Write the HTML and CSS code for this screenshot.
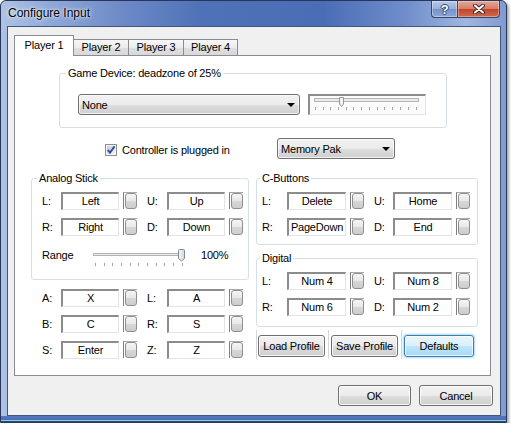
FILE: index.html
```html
<!DOCTYPE html>
<html lang="en">
<head>
  <meta charset="UTF-8">
  <title>Configure Input</title>
  <link rel="stylesheet" href="styles.css">
</head>
<body>
  <div class="window">
    <div class="titlebar">
      <span class="title">Configure Input</span>
      <div class="caption-btns">
        <span class="cap-btn help">?</span>
        <span class="cap-btn close">
          <svg width="12" height="10" viewBox="0 0 12 10">
            <path d="M2 1.5L10 8.5M10 1.5L2 8.5" stroke="#3c2a2a" stroke-width="4" stroke-linecap="round"/>
            <path d="M2 1.5L10 8.5M10 1.5L2 8.5" stroke="#fff" stroke-width="2" stroke-linecap="round"/>
          </svg>
        </span>
      </div>
    </div>

    <div class="client">
      <div class="tabs">
        <span class="tab active">Player 1</span>
        <span class="tab">Player 2</span>
        <span class="tab">Player 3</span>
        <span class="tab">Player 4</span>
      </div>

      <div class="tab-panel">
        <fieldset class="group device-group">
          <legend>Game Device: deadzone of 25%</legend>
          <div class="device-row">
            <div class="combo device-combo"><span>None</span><span class="arrow"></span></div>
            <div class="deadzone">
              <svg width="115" height="18" viewBox="0 0 115 18">
                <rect x="4.5" y="2.5" width="104" height="3" fill="#e9ecec" stroke="#b4b4b4"/>
                <path d="M29.5 1.5h4v6.5l-2 2.5l-2-2.5z" fill="#f1f2f3" stroke="#8d98a2"/>
                <path d="M5.5 11v3M13.5 11v3M20.5 11v3M28.5 11v3M36.5 11v3M43.5 11v3M51.5 11v3M59.5 11v3M67.5 11v3M74.5 11v3M82.5 11v3M90.5 11v3M98.5 11v3M106.5 11v3" stroke="#a4a4a4"/>
              </svg>
            </div>
          </div>
        </fieldset>

        <div class="plug-row">
          <label class="check">
            <span class="checkbox">
              <svg width="12" height="12" viewBox="0 0 12 12">
                <defs>
                  <linearGradient id="cbfill" x1="0" y1="0" x2="1" y2="1">
                    <stop offset="0" stop-color="#c6ccd6"/>
                    <stop offset="1" stop-color="#f4f6f8"/>
                  </linearGradient>
                </defs>
                <rect x="0.5" y="0.5" width="11" height="11" fill="#f6f6f6" stroke="#8e8f8f"/>
                <rect x="2" y="2" width="8" height="8" fill="url(#cbfill)"/>
                <path d="M2.8 5.8L5 8.6L9.6 2.4" fill="none" stroke="#2f4f9c" stroke-width="1.9"/>
              </svg>
            </span>
            Controller is plugged in
          </label>
          <div class="combo pak-combo"><span>Memory Pak</span><span class="arrow"></span></div>
        </div>

        <div class="columns">
          <div class="col-left">
            <fieldset class="group analog-group">
              <legend>Analog Stick</legend>
              <div class="key-row">
                <span class="lbl">L:</span><span class="key">Left</span><span class="pick"><i></i></span>
                <span class="lbl lbl2">U:</span><span class="key">Up</span><span class="pick"><i></i></span>
              </div>
              <div class="key-row">
                <span class="lbl">R:</span><span class="key">Right</span><span class="pick"><i></i></span>
                <span class="lbl lbl2">D:</span><span class="key">Down</span><span class="pick"><i></i></span>
              </div>
              <div class="range-row">
                <span class="range-lbl">Range</span>
                <svg width="96" height="22" viewBox="0 0 96 22">
                  <defs>
                    <linearGradient id="thumb" x1="0" y1="0" x2="1" y2="0">
                      <stop offset="0" stop-color="#f7f7f7"/>
                      <stop offset="1" stop-color="#d3d7db"/>
                    </linearGradient>
                  </defs>
                  <rect x="1.5" y="6.5" width="90" height="2" fill="#e9ecec" stroke="#b4b4b4"/>
                  <path d="M86.5 3.5q0-1 1-1h4q1 0 1 1v8l-3 2.5l-3-2.5z" fill="url(#thumb)" stroke="#7f8892"/>
                  <path d="M3.5 16v3M12.5 16v3M20.5 16v3M29.5 16v3M38.5 16v3M46.5 16v3M55.5 16v3M64.5 16v3M72.5 16v3M81.5 16v3M90.5 16v3" stroke="#a4a4a4"/>
                </svg>
                <span class="range-val">100%</span>
              </div>
            </fieldset>

            <div class="key-rows">
              <div class="key-row">
                <span class="lbl">A:</span><span class="key">X</span><span class="pick"><i></i></span>
                <span class="lbl lbl2">L:</span><span class="key">A</span><span class="pick"><i></i></span>
              </div>
              <div class="key-row">
                <span class="lbl">B:</span><span class="key">C</span><span class="pick"><i></i></span>
                <span class="lbl lbl2">R:</span><span class="key">S</span><span class="pick"><i></i></span>
              </div>
              <div class="key-row">
                <span class="lbl">S:</span><span class="key">Enter</span><span class="pick"><i></i></span>
                <span class="lbl lbl2">Z:</span><span class="key">Z</span><span class="pick"><i></i></span>
              </div>
            </div>
          </div>

          <div class="col-right">
            <fieldset class="group cbtn-group">
              <legend>C-Buttons</legend>
              <div class="key-row">
                <span class="lbl">L:</span><span class="key">Delete</span><span class="pick"><i></i></span>
                <span class="lbl lbl2">U:</span><span class="key">Home</span><span class="pick"><i></i></span>
              </div>
              <div class="key-row">
                <span class="lbl">R:</span><span class="key">PageDown</span><span class="pick"><i></i></span>
                <span class="lbl lbl2">D:</span><span class="key">End</span><span class="pick"><i></i></span>
              </div>
            </fieldset>

            <fieldset class="group digital-group">
              <legend>Digital</legend>
              <div class="key-row">
                <span class="lbl">L:</span><span class="key">Num 4</span><span class="pick"><i></i></span>
                <span class="lbl lbl2">U:</span><span class="key">Num 8</span><span class="pick"><i></i></span>
              </div>
              <div class="key-row">
                <span class="lbl">R:</span><span class="key">Num 6</span><span class="pick"><i></i></span>
                <span class="lbl lbl2">D:</span><span class="key">Num 2</span><span class="pick"><i></i></span>
              </div>
            </fieldset>

            <div class="profile-row">
              <div class="pcell"><button class="btn load-btn">Load Profile</button></div>
              <div class="pcell"><button class="btn save-btn">Save Profile</button></div>
              <div class="pcell"><button class="btn default defaults-btn">Defaults</button></div>
            </div>
          </div>
        </div>
      </div>

      <div class="dialog-btns">
        <button class="btn ok-btn">OK</button>
        <button class="btn cancel-btn">Cancel</button>
      </div>
    </div>
  </div>
</body>
</html>
```

FILE: styles.css
```css
* {
  box-sizing: border-box;
}
body {
  margin: 0;
  background: #fff;
  font-family: "Liberation Sans", Arial, sans-serif;
  font-size: 11px;
  letter-spacing: -0.2px;
  color: #000;
}

/* window frame */
.window {
  width: 507px;
  height: 423px;
  padding: 0 5px 6px 6px;
  border: 1px solid #27365a;
  border-radius: 6px 6px 0 0;
  background:
    linear-gradient(to bottom, transparent 415px, #5677bb 415px, #4a6db5 419px, #72d6f2 419px, #72d6f2 420px, #34466e 420px),
    linear-gradient(to right, #aec3e4 0%, #8ea8d8 10%, #6d8ac7 24%, #4e71b7 40%, #4a6db5 64%, #6f8dca 80%, #9fb6e0 92%, #7f9bd0 100%);
  box-shadow: 2px 2px 3px rgba(0,0,0,0.35);
}
.titlebar {
  height: 25px;
  display: flex;
  justify-content: space-between;
  align-items: flex-start;
}
.title {
  font-size: 12px;
  letter-spacing: 0;
  line-height: 25px;
  padding-left: 1px;
  text-shadow: 0 0 5px rgba(255,255,255,0.9), 0 0 2px rgba(255,255,255,0.9);
}
.caption-btns {
  display: flex;
  margin-right: 1px;
}
.cap-btn {
  height: 17px;
  display: flex;
  align-items: center;
  justify-content: center;
  border: 1px solid #34466e;
  border-top: none;
  box-shadow: inset 0 0 0 1px rgba(255,255,255,0.35);
}
.help {
  width: 26px;
  border-right: none;
  border-radius: 0 0 0 4px;
  background: linear-gradient(#b8c9e6, #98afd8 50%, #7591c7 51%, #8ba8da);
  color: #fff;
  font-weight: bold;
  font-size: 13px;
  text-shadow: 1px 0 0 #33446a, -1px 0 0 #33446a, 0 1px 0 #33446a, 0 -1px 0 #33446a;
}
.close {
  width: 43px;
  border-radius: 0 0 4px 0;
  background: linear-gradient(#e6a595, #d77c66 50%, #c3432c 51%, #d06a4f);
}

/* client area */
.client {
  height: 390px;
  padding-top: 8px;
  border: 1px solid #44557a;
  background: #f0f0f0;
}

.tabs {
  display: flex;
  align-items: flex-end;
  height: 20px;
  margin-left: 6px;
}
.tab {
  width: 56px;
  height: 16px;
  margin-left: -1px;
  border: 1px solid #898c95;
  border-bottom: none;
  background: linear-gradient(#f7f7f7, #ececec 50%, #dfdfdf 51%, #d9d9d9);
  line-height: 15px;
  text-align: center;
}
.tab:last-child {
  width: 55px;
}
.tab.active {
  width: 60px;
  height: 21px;
  margin-left: 0;
  margin-bottom: -1px;
  background: #fff;
  line-height: 18px;
  position: relative;
  z-index: 1;
}
.tab-panel {
  width: 477px;
  height: 321px;
  margin-left: 6px;
  border: 1px solid #898c95;
  background: #fff;
}

/* group boxes */
.group {
  margin: 0;
  border: 1px solid #d5dfe5;
  border-radius: 3px;
  min-width: 0;
}
.group legend {
  padding: 0 2px;
  line-height: 13px;
}
.device-group {
  width: 388px;
  margin: 11px 0 0 44px;
  padding: 14px 0 12px 18px;
}
.device-group legend {
  margin-left: -12px;
}
.device-row {
  display: flex;
}

.combo {
  display: flex;
  align-items: center;
  justify-content: space-between;
  height: 21px;
  padding: 0 4px 0 3px;
  border: 1px solid #707070;
  border-radius: 3px;
  background: linear-gradient(#f2f2f2, #ebebeb 50%, #dddddd 51%, #cfcfcf);
  box-shadow: inset 0 0 0 1px rgba(255,255,255,0.7);
}
.arrow {
  width: 0;
  height: 0;
  border-left: 4px solid transparent;
  border-right: 4px solid transparent;
  border-top: 4px solid #000;
}
.device-combo {
  width: 222px;
}
.deadzone {
  width: 118px;
  height: 21px;
  margin-left: 8px;
  border-style: solid;
  border-width: 2px 1px 1px 2px;
  border-color: #8c8c8c #e3e3e3 #e3e3e3 #8c8c8c;
  background: #fbfbfb;
}
.deadzone svg, .range-row svg {
  display: block;
}

.plug-row {
  display: flex;
  align-items: center;
  height: 21px;
  margin-top: 10px;
  padding-left: 90px;
}
.check {
  display: flex;
  align-items: center;
  width: 172px;
  margin-top: 3px;
}
.checkbox {
  width: 12px;
  height: 12px;
  margin-right: 5px;
}
.checkbox svg {
  display: block;
}
.pak-combo {
  width: 118px;
}

/* key columns */
.columns {
  display: flex;
  gap: 7px;
  margin-top: 13px;
  padding-left: 16px;
}
.col-left {
  width: 218px;
}
.col-right {
  width: 222px;
}
.analog-group {
  padding: 7px 0 10px 10px;
}
.analog-group legend {
  margin-left: -5px;
}
.cbtn-group {
  padding: 7px 0 8px 5px;
}
.cbtn-group legend, .digital-group legend {
  margin-left: -2px;
}
.digital-group {
  margin-top: 7px;
  padding: 7px 0 10px 5px;
}

.key-row {
  display: flex;
  align-items: flex-start;
  height: 18px;
}
.key-row + .key-row {
  margin-top: 8px;
}
.lbl {
  width: 19px;
  line-height: 18px;
}
.lbl2 {
  width: 20px;
  margin-left: 10px;
}
.key {
  width: 58px;
  height: 18px;
  border-style: solid;
  border-width: 2px 1px 1px 2px;
  border-color: #8c8c8c #e3e3e3 #e3e3e3 #8c8c8c;
  background: #fff;
  text-align: center;
  line-height: 15px;
  white-space: nowrap;
  overflow: hidden;
}
.pick {
  display: flex;
  width: 14px;
  height: 17px;
  margin-left: 4px;
  padding-left: 1px;
  border-left: 1px solid #7f7f7f;
  border-top: 1px solid #a9a9a9;
}
.pick i {
  flex: 1;
  border: 1px solid #8e8f8f;
  border-radius: 3px;
  background: linear-gradient(#f5f5f5, #e8e8e8 50%, #d7d7d7 51%, #cdcdcd);
}
.col-right .lbl {
  width: 25px;
}
.col-right .lbl2 {
  width: 19px;
  margin-left: 10px;
}
.col-right .key {
  width: 59px;
}

.range-row {
  display: flex;
  align-items: flex-start;
  height: 22px;
  margin-top: 11px;
}
.range-lbl {
  width: 50px;
  line-height: 16px;
}
.range-val {
  margin-left: 13px;
  line-height: 16px;
}
.key-rows {
  margin-top: 9px;
  padding-left: 11px;
}

/* buttons */
.btn {
  height: 22px;
  padding: 0;
  border: 1px solid #707070;
  border-radius: 3px;
  background: linear-gradient(#f2f2f2, #ebebeb 50%, #dddddd 51%, #cfcfcf);
  box-shadow: inset 0 0 0 1px rgba(255,255,255,0.8);
  font-family: inherit;
  font-size: 11px;
  letter-spacing: -0.2px;
  color: #000;
}
.btn.default {
  border-color: #3c7fb1;
  background: linear-gradient(#eaf6fd, #d9f0fc 50%, #bee6fd 51%, #a7d9f5);
  box-shadow: 0 0 2px 1px rgba(70,170,230,0.45), inset 0 0 0 1px rgba(255,255,255,0.7);
}
.profile-row {
  display: flex;
  margin-top: 3px;
}
.pcell {
  height: 29px;
  padding: 5px 0 0 1px;
  border-left: 1px solid #d6d6d6;
}
.pcell + .pcell {
  margin-left: 3px;
  padding-left: 2px;
}
.load-btn, .save-btn {
  width: 67px;
}
.defaults-btn {
  width: 70px;
}
.dialog-btns {
  display: flex;
  justify-content: flex-end;
  gap: 8px;
  margin-top: 9px;
  padding-right: 7px;
}
.ok-btn {
  width: 73px;
  height: 21px;
}
.cancel-btn {
  width: 74px;
  height: 21px;
}
```
